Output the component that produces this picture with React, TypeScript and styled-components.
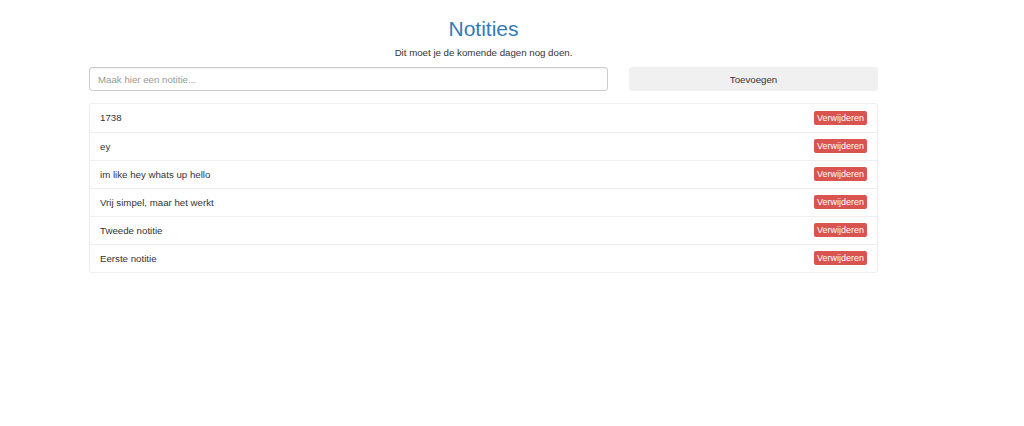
import React from "react";
import styled, { createGlobalStyle } from "styled-components";

const Global = createGlobalStyle`
  html, body { margin: 0; padding: 0; background: #fff; }
  body { font-family: "Liberation Sans", Arial, sans-serif; color: #333; }
  * { box-sizing: border-box; }
`;

const Page = styled.div`
  width: 967px;
  display: flex;
  flex-direction: column;
  align-items: center;
  padding-top: 17px;
`;

const Title = styled.h1`
  margin: 0;
  font-size: 21px;
  font-weight: 400;
  line-height: 24px;
  color: #337ab7;
`;

const Subtitle = styled.p`
  margin: 5px 0 0;
  font-size: 9.7px;
  line-height: 14px;
  color: #333;
`;

const Content = styled.div`
  width: 789px;
  display: flex;
  flex-direction: column;
`;

const Form = styled.div`
  display: flex;
  gap: 21px;
  margin-top: 7px;
`;

const Input = styled.input`
  width: 519px;
  height: 24px;
  border: 1px solid #ccc;
  border-radius: 3px;
  padding: 0 8px;
  font-family: inherit;
  font-size: 9.7px;
  color: #555;
  box-shadow: inset 0 1px 1px rgba(0, 0, 0, 0.06);
  outline: none;
  &::placeholder { color: #999; }
`;

const AddButton = styled.button`
  width: 249px;
  height: 24px;
  border: none;
  border-radius: 3px;
  background: #f0f0f0;
  font-family: inherit;
  font-size: 9.7px;
  color: #333;
  padding: 0;
`;

const List = styled.ul`
  list-style: none;
  margin: 12px 0 0;
  padding: 0;
  border: 1px solid #eee;
  border-radius: 3px;
`;

const Item = styled.li`
  height: 28px;
  display: flex;
  align-items: center;
  justify-content: space-between;
  padding: 0 10px 1px 10px;
  font-size: 9.7px;
  color: #333;
  & + & { border-top: 1px solid #eee; }
`;

const DeleteButton = styled.button`
  height: 14px;
  padding: 0 3px;
  border: none;
  border-radius: 2px;
  background: #d9534f;
  color: #fff;
  font-family: inherit;
  font-size: 9px;
  line-height: 14px;
`;

const notes = [
  "1738",
  "ey",
  "im like hey whats up hello",
  "Vrij simpel, maar het werkt",
  "Tweede notitie",
  "Eerste notitie",
];

export default function App() {
  return (
    <>
      <Global />
      <Page>
        <Title>Notities</Title>
        <Subtitle>Dit moet je de komende dagen nog doen.</Subtitle>
        <Content>
          <Form>
            <Input placeholder="Maak hier een notitie..." />
            <AddButton>Toevoegen</AddButton>
          </Form>
          <List>
            {notes.map((n) => (
              <Item key={n}>
                <span>{n}</span>
                <DeleteButton>Verwijderen</DeleteButton>
              </Item>
            ))}
          </List>
        </Content>
      </Page>
    </>
  );
}
